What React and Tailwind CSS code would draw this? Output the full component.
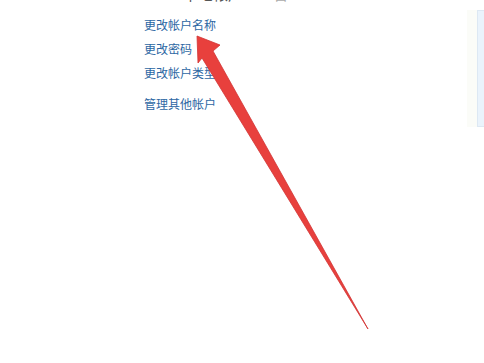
import React from "react";

const font = { fontFamily: '"Microsoft YaHei", "Noto Sans CJK SC", sans-serif' };

export default function App() {
  const links = ["更改帐户名称", "更改密码", "更改帐户类型"];
  return (
    <div className="relative w-[484px] h-[363px] overflow-hidden bg-white" style={font}>
      <div className="flex">
        <div className="flex flex-col">
          <div className="ml-[183px] -mt-[16px] h-[19px] flex gap-[30px] text-[15px] leading-[19px] text-[#555]">
            <span>本地帐户</span>
            <span className="text-[#aaa]">管</span>
          </div>
          <div className="ml-[144px] mt-[10px] flex flex-col text-[12px] leading-[16px] text-[#2d67a3]">
            {links.map((t) => (
              <span key={t} className="h-[24px] flex items-center">{t}</span>
            ))}
            <span className="mt-[7px] h-[24px] flex items-center">管理其他帐户</span>
          </div>
        </div>
        <div className="ml-auto mt-[10px] flex">
          <div className="w-[10px] h-[117px] bg-[#fbfcf8]" />
          <div className="w-[7px] h-[117px] bg-[#eaf3fc] border-l border-t border-b border-[#dde8f3]" />
        </div>
      </div>
      <svg className="absolute left-0 top-0 pointer-events-none" width="484" height="363" viewBox="0 0 484 363">
        <polygon
          points="197,36 220,45 213,51 368,329 202,58 198,63"
          fill="#e8403d"
          stroke="#d23434"
          strokeWidth="0.8"
          strokeLinejoin="round"
        />
      </svg>
    </div>
  );
}
